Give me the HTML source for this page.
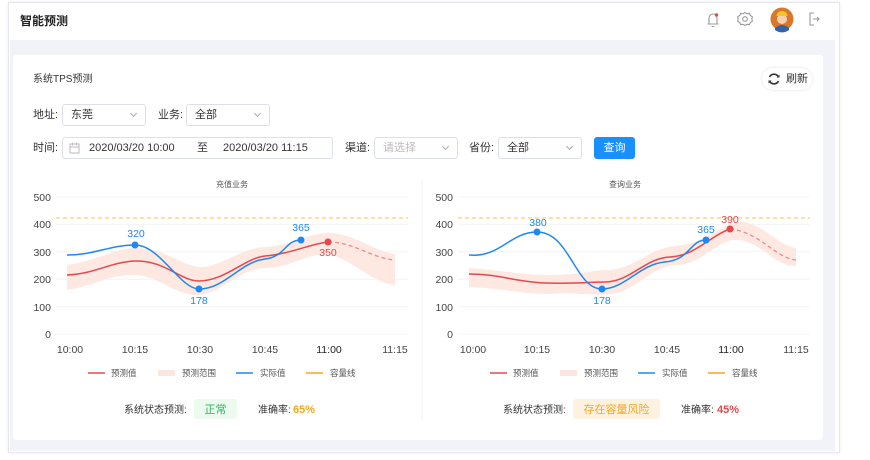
<!DOCTYPE html>
<html><head><meta charset="utf-8">
<style>
*{margin:0;padding:0;box-sizing:border-box}
body{width:870px;height:460px;background:#fff;font-family:"Liberation Sans","Noto Sans CJK SC",sans-serif;position:relative;overflow:hidden;color:#333}
.frame{position:absolute;left:8px;top:2px;width:832px;height:451px;border:1px solid #e6e7ec;background:#fff;box-shadow:0 0 3px rgba(0,0,0,.08)}
.title{position:absolute;left:20px;top:12px;font-size:12px;font-weight:bold;color:#222}
.gray{position:absolute;left:10px;top:40px;width:825px;height:411px;background:#f2f3f8}
.card{position:absolute;left:13px;top:55px;width:810px;height:385px;background:#fff;border-radius:3px}
.abs{position:absolute}
.sel{position:absolute;height:22px;border:1px solid #dcdfe6;border-radius:3px;font-size:11px;line-height:20px;padding-left:8px;color:#333;background:#fff}
.sel:after{content:"";position:absolute;right:9px;top:6px;width:4px;height:4px;border-right:1px solid #aaa;border-bottom:1px solid #aaa;transform:rotate(45deg)}
.lbl{position:absolute;font-size:11px;line-height:14px;color:#333}
</style></head><body>
<div class="frame"></div>
<div class="title">智能预测</div>
<svg class="abs" style="left:700px;top:7px" width="130" height="26" viewBox="0 0 130 26">
 <path d="M9 17 L9 11 a4 4 0 0 1 8 0 L17 17 Z M7.5 17 H18.5 M11.5 19.5 h3" fill="none" stroke="#999" stroke-width="1.1"/>
 <circle cx="16.5" cy="8" r="1.7" fill="#e84a4a"/>
 <circle cx="45" cy="12" r="2.3" fill="none" stroke="#999" stroke-width="1.1"/>
 <path d="M45 5.5 l2 1.2 2.3-.3 1 2.1 2 1.2-.4 2.3.4 2.3-2 1.2-1 2.1-2.3-.3-2 1.2-2-1.2-2.3.3-1-2.1-2-1.2.4-2.3-.4-2.3 2-1.2 1-2.1 2.3.3z" fill="none" stroke="#999" stroke-width="1.1"/>
 <circle cx="82" cy="12" r="11.5" fill="#d9782a"/>
 <circle cx="82" cy="12" r="5" fill="#f4d2b0"/>
 <path d="M76.5 9 a5.5 5 0 0 1 11 0 z" fill="#f3c623"/>
 <path d="M75 21 q7 -6 14 0 v2 a11.5 11.5 0 0 1 -14 0z" fill="#3461a8"/>
 <path d="M114 6 h-4 v12 h4 M113 12 h6 M117 10 l2 2 -2 2" fill="none" stroke="#999" stroke-width="1.1"/>
</svg>
<div class="gray"></div>
<div class="card"></div>
<div class="lbl" style="left:33px;top:73px;font-size:10px">系统TPS预测</div>
<div class="abs" style="left:762px;top:68px;width:50px;height:22px;border-radius:11px;box-shadow:0 0 3px rgba(0,0,0,.12);font-size:11px;line-height:22px;padding-left:24px;color:#333">刷新</div>
<svg class="abs" style="left:767px;top:72px" width="14" height="14" viewBox="0 0 14 14"><path d="M11.5 5 A5 5 0 0 0 2.5 5 M2.5 9 A5 5 0 0 0 11.5 9" fill="none" stroke="#333" stroke-width="1.6"/><path d="M12.5 2.5 v3 h-3z M1.5 11.5 v-3 h3z" fill="#333"/></svg>
<div class="lbl" style="left:33px;top:108px">地址:</div>
<div class="sel" style="left:62px;top:104px;width:84px">东莞</div>
<div class="lbl" style="left:158px;top:108px">业务:</div>
<div class="sel" style="left:186px;top:104px;width:84px">全部</div>
<div class="lbl" style="left:33px;top:141px">时间:</div>
<div class="abs" style="left:62px;top:137px;width:271px;height:22px;border:1px solid #dcdfe6;border-radius:3px;font-size:11px;line-height:20px;color:#333">
 <svg class="abs" style="left:6px;top:4px" width="11" height="12" viewBox="0 0 11 12"><rect x="1" y="2" width="9" height="9" fill="none" stroke="#bbb"/><path d="M1 5h9M3.5 0.5v3M7.5 0.5v3" stroke="#bbb"/></svg>
 <span class="abs" style="left:26px">2020/03/20 10:00</span><span class="abs" style="left:134px">至</span><span class="abs" style="left:160px">2020/03/20 11:15</span></div>
<div class="lbl" style="left:345px;top:141px">渠道:</div>
<div class="sel" style="left:374px;top:137px;width:84px;color:#bbb">请选择</div>
<div class="lbl" style="left:469px;top:141px">省份:</div>
<div class="sel" style="left:498px;top:137px;width:84px">全部</div>
<div class="abs" style="left:594px;top:137px;width:41px;height:22px;background:#1890ff;border-radius:3px;color:#fff;font-size:11px;line-height:22px;text-align:center">查询</div>

<svg class="abs" style="left:0;top:0" width="870" height="460" viewBox="0 0 870 460" font-family="Liberation Sans, Noto Sans CJK SC, sans-serif">
 <line x1="422" y1="180" x2="422" y2="420" stroke="#f0f0f0"/>
 <g>
  <text x="232" y="187" font-size="8" fill="#555" text-anchor="middle">充值业务</text>
  <g stroke="#f3f4f7"><line x1="56" y1="197" x2="408" y2="197"/><line x1="56" y1="224.4" x2="408" y2="224.4"/><line x1="56" y1="251.8" x2="408" y2="251.8"/><line x1="56" y1="279.2" x2="408" y2="279.2"/><line x1="56" y1="306.6" x2="408" y2="306.6"/><line x1="56" y1="334" x2="408" y2="334"/></g>
  <g font-size="10.5" fill="#444" text-anchor="end"><text x="51" y="201">500</text><text x="51" y="228">400</text><text x="51" y="256">300</text><text x="51" y="283">200</text><text x="51" y="311">100</text><text x="51" y="338">0</text></g>
  <g font-size="10.5" fill="#444" text-anchor="middle"><text x="70" y="353">10:00</text><text x="135" y="353">10:15</text><text x="200" y="353">10:30</text><text x="265" y="353">10:45</text><text x="329" y="353" fill="#222">11:00</text><text x="395" y="353">11:15</text></g>
  <line x1="56" y1="218" x2="408" y2="218" stroke="#f5c55a" stroke-dasharray="4 3"/>
  <path d="M67 265 C100 260 115 248 135 248 C165 248 180 265 199 267 C220 268 240 248 265 247 C290 246 310 232 330 233 C355 234 375 252 395 254 L395 285 C375 284 355 262 330 254 C310 252 290 268 265 268 C240 268 220 294 199 295 C175 296 160 276 135 275 C110 274 95 286 67 290 Z" fill="#fde6df" opacity=".9"/>
  <path d="M67 275 C95 274 110 262 135 261 C165 260 180 281 199 281 C225 281 245 258 265 256 C290 254 310 244 328 242" fill="none" stroke="#e5484d" stroke-width="1.5"/>
  <path d="M328 242 C355 242 370 258 395 260" fill="none" stroke="#f08a8a" stroke-width="1.3" stroke-dasharray="4 3"/>
  <path d="M67 255 C95 255 110 245 135 245 C160 245 180 289 199 289 C225 289 240 262 265 259 C285 257 285 240 301 240" fill="none" stroke="#1e88f0" stroke-width="1.5"/>
  <circle cx="135" cy="245" r="3.5" fill="#1e88f0"/><circle cx="199" cy="289" r="3.5" fill="#1e88f0"/><circle cx="301" cy="240" r="3.5" fill="#1e88f0"/><circle cx="328" cy="242" r="3.5" fill="#e5484d"/>
  <g font-size="10.5" text-anchor="middle"><text x="136" y="237" fill="#1e88f0">320</text><text x="199" y="304" fill="#1e88f0">178</text><text x="301" y="231" fill="#1e88f0">365</text><text x="328" y="256" fill="#e5484d">350</text></g>
  <g font-size="8.5" fill="#555"><line x1="88" y1="373" x2="105" y2="373" stroke="#e5484d" stroke-width="1.5"/><text x="111" y="376">预测值</text>
   <rect x="158" y="370" width="17" height="6" fill="#fde6df"/><text x="182" y="376">预测范围</text>
   <line x1="236" y1="373" x2="253" y2="373" stroke="#1e88f0" stroke-width="1.5"/><text x="260" y="376">实际值</text>
   <line x1="306" y1="373" x2="323" y2="373" stroke="#f5a623" stroke-width="1.5"/><text x="330" y="376">容量线</text></g>
  <text x="124" y="413" font-size="10" fill="#333">系统状态预测:</text>
  <rect x="194" y="399" width="43" height="20" rx="3" fill="#ecfaf0"/><text x="215.5" y="413" font-size="11" fill="#2db55d" text-anchor="middle">正常</text>
  <text x="258" y="413" font-size="10" fill="#333">准确率:</text><text x="293" y="413" font-size="11" font-weight="bold" fill="#f5a623">65%</text>
 </g>
 <g>
  <text x="625" y="187" font-size="8" fill="#555" text-anchor="middle">查询业务</text>
  <g stroke="#f3f4f7"><line x1="458" y1="197" x2="810" y2="197"/><line x1="458" y1="224.4" x2="810" y2="224.4"/><line x1="458" y1="251.8" x2="810" y2="251.8"/><line x1="458" y1="279.2" x2="810" y2="279.2"/><line x1="458" y1="306.6" x2="810" y2="306.6"/><line x1="458" y1="334" x2="810" y2="334"/></g>
  <g font-size="10.5" fill="#444" text-anchor="end"><text x="453" y="201">500</text><text x="453" y="228">400</text><text x="453" y="256">300</text><text x="453" y="283">200</text><text x="453" y="311">100</text><text x="453" y="338">0</text></g>
  <g font-size="10.5" fill="#444" text-anchor="middle"><text x="473" y="353">10:00</text><text x="537" y="353">10:15</text><text x="602" y="353">10:30</text><text x="667" y="353">10:45</text><text x="731" y="353" fill="#222">11:00</text><text x="796" y="353">11:15</text></g>
  <line x1="458" y1="218" x2="810" y2="218" stroke="#f5c55a" stroke-dasharray="4 3"/>
  <path d="M469 268 C500 270 520 275 550 275 C580 275 590 270 610 270 C635 268 650 248 675 246 C700 244 715 232 732 222 C760 218 775 245 796 248 L796 266 C775 268 760 238 732 240 C712 245 700 265 675 265 C650 267 635 292 610 294 C590 296 575 292 550 294 C520 294 500 288 469 287 Z" fill="#fde6df" opacity=".9"/>
  <path d="M469 274 C500 274 515 282 545 283 C575 284 590 282 605 282 C630 282 645 258 670 257 C695 256 710 236 730 229" fill="none" stroke="#e5484d" stroke-width="1.5"/>
  <path d="M730 229 C760 232 775 258 796 260" fill="none" stroke="#f08a8a" stroke-width="1.3" stroke-dasharray="4 3"/>
  <path d="M469 255 C500 258 510 232 537 232 C570 232 575 289 602 289 C625 289 640 264 665 262 C690 260 690 240 706 240" fill="none" stroke="#1e88f0" stroke-width="1.5"/>
  <circle cx="537" cy="232" r="3.5" fill="#1e88f0"/><circle cx="602" cy="289" r="3.5" fill="#1e88f0"/><circle cx="706" cy="240" r="3.5" fill="#1e88f0"/><circle cx="730" cy="229" r="3.5" fill="#e5484d"/>
  <g font-size="10.5" text-anchor="middle"><text x="538" y="226" fill="#1e88f0">380</text><text x="602" y="304" fill="#1e88f0">178</text><text x="706" y="233" fill="#1e88f0">365</text><text x="730" y="223" fill="#e5484d">390</text></g>
  <g font-size="8.5" fill="#555"><line x1="490" y1="373" x2="507" y2="373" stroke="#e5484d" stroke-width="1.5"/><text x="513" y="376">预测值</text>
   <rect x="560" y="370" width="17" height="6" fill="#fde6df"/><text x="584" y="376">预测范围</text>
   <line x1="638" y1="373" x2="655" y2="373" stroke="#1e88f0" stroke-width="1.5"/><text x="662" y="376">实际值</text>
   <line x1="708" y1="373" x2="725" y2="373" stroke="#f5a623" stroke-width="1.5"/><text x="732" y="376">容量线</text></g>
  <text x="503" y="413" font-size="10" fill="#333">系统状态预测:</text>
  <rect x="573" y="399" width="87" height="20" rx="3" fill="#fdf1e0"/><text x="616.5" y="413" font-size="11" fill="#f5a623" text-anchor="middle">存在容量风险</text>
  <text x="681" y="413" font-size="10" fill="#333">准确率:</text><text x="717" y="413" font-size="11" font-weight="bold" fill="#e5484d">45%</text>
 </g>
</svg>
</body></html>
